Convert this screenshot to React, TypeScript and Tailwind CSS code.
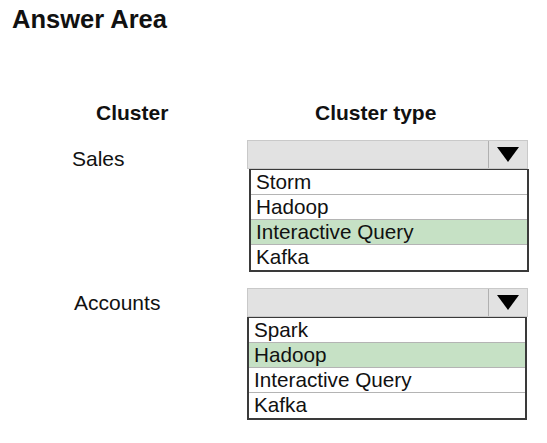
import React from "react";

type Opt = { label: string; selected?: boolean };

function Dropdown({ options, listMl }: { options: Opt[]; listMl?: string }) {
  return (
    <div className="w-[282px]">
      <div className="flex h-[29px] w-[281px] border border-[#c9c9c9] bg-[#e2e2e2]">
        <div className="flex-1 border-r border-[#b0b0b0]" />
        <div className="flex w-[38px] items-center justify-center">
          <svg width="22" height="15" viewBox="0 0 22 15">
            <polygon points="0,0 22,0 11,15" fill="#000" />
          </svg>
        </div>
      </div>
      <div className={`${listMl ?? "ml-[2px]"} w-[280px] border-2 border-t-[1.5px] border-[#3a3a3a] bg-white`}>
        {options.map((o, i) => (
          <div
            key={o.label}
            className={`flex h-[25px] items-center pl-[5px] text-[20.7px] leading-none text-[#111] ${
              i < options.length - 1 ? "border-b border-[#b4b4b4]" : ""
            } ${o.selected ? "bg-[#c6e1c5]" : ""}`}
          >
            {o.label}
          </div>
        ))}
      </div>
    </div>
  );
}

export default function App() {
  return (
    <div
      className="h-[443px] w-[547px] bg-white text-[#111]"
      style={{ fontFamily: '"Liberation Sans", Arial, sans-serif' }}
    >
      <div className="flex flex-col pt-[4px]">
        <div className="ml-[12px] h-[30px] text-[25.5px] font-bold leading-[30px]">Answer Area</div>
        <div className="mt-[67px] flex h-[24px] text-[21px] font-bold leading-[24px]">
          <div className="ml-[96px] w-[219px]">Cluster</div>
          <div>Cluster type</div>
        </div>
        <div className="mt-[15px] flex">
          <div className="ml-[72px] mt-[7px] w-[175px] text-[21px] leading-[24px]">Sales</div>
          <Dropdown
            options={[
              { label: "Storm" },
              { label: "Hadoop" },
              { label: "Interactive Query", selected: true },
              { label: "Kafka" },
            ]}
          />
        </div>
        <div className="mt-[16px] flex">
          <div className="ml-[74px] mt-[3px] w-[173px] text-[21px] leading-[24px]">Accounts</div>
          <Dropdown
            listMl="ml-0"
            options={[
              { label: "Spark" },
              { label: "Hadoop", selected: true },
              { label: "Interactive Query" },
              { label: "Kafka" },
            ]}
          />
        </div>
      </div>
    </div>
  );
}
